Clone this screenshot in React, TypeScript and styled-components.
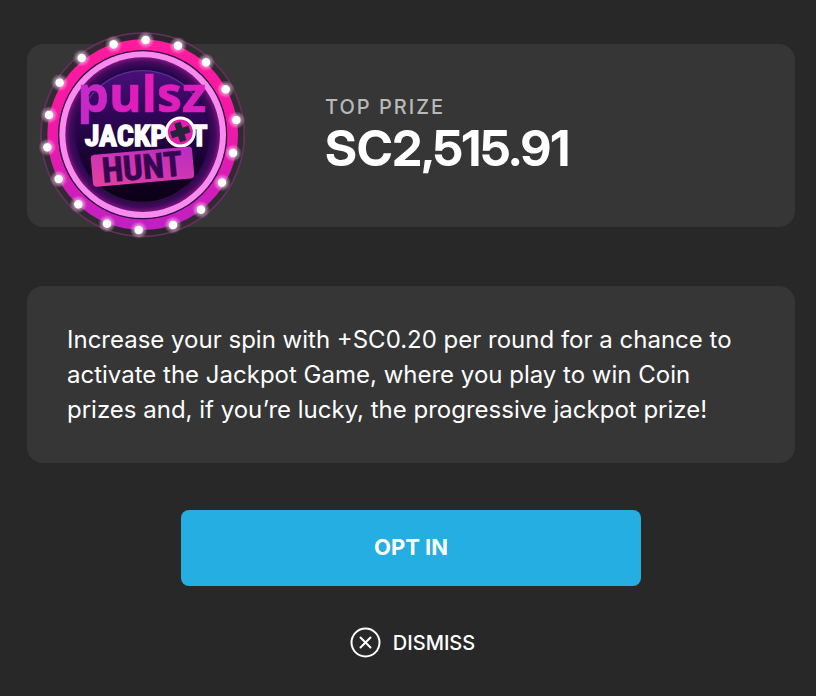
import React from "react";
import styled, { createGlobalStyle } from "styled-components";

const GlobalStyle = createGlobalStyle`
  *, *::before, *::after { box-sizing: border-box; }
  body {
    margin: 0;
    background: #282828;
    color: #fff;
    font-family: Inter, "Liberation Sans", sans-serif;
  }
`;

const Dialog = styled.main`
  display: flex;
  flex-direction: column;
  padding: 44px 21px 36px 27px;
`;

const Card = styled.section`
  position: relative;
  border-radius: 16px;
  background: #363636;
`;

const PrizeCard = styled(Card)`
  padding: 50px 24px 49px 298px;
`;

const MessageCard = styled(Card)`
  margin-top: 59px;
  padding: 36px 40px;
`;

const Emblem = styled.svg`
  position: absolute;
  left: 3px;
  top: -19px;
  width: 225px;
  height: 220px;
`;

const PrizeLabel = styled.h2`
  margin: 0;
  color: #b9b9b9;
  font-size: 20px;
  font-weight: 500;
  line-height: 26px;
  letter-spacing: 2px;
`;

const PrizeAmount = styled.p`
  margin: 0;
  font-family: "Inter Display", Inter, "Liberation Sans", sans-serif;
  font-size: 49px;
  font-weight: 700;
  line-height: 58px;
`;

const Message = styled.p`
  margin: 0;
  font-size: 24px;
  line-height: 35px;
`;

const Actions = styled.div`
  display: flex;
  flex-direction: column;
  align-items: center;
  gap: 38px;
  margin-top: 47px;
`;

const OptInButton = styled.button`
  width: 60%;
  height: 76px;
  padding: 0 0 2px;
  border: 0;
  border-radius: 8px;
  background: #25aee1;
  color: #fff;
  font: 700 22px Inter, "Liberation Sans", sans-serif;
  cursor: pointer;
`;

const DismissButton = styled.button`
  display: flex;
  align-items: center;
  gap: 12px;
  padding: 3px 0 3px 3px;
  border: 0;
  background: none;
  color: #fff;
  font: 500 20px Inter, "Liberation Sans", sans-serif;
  cursor: pointer;
`;

const bulbs = [
  [347, 45], [444, 62], [528, 112], [587, 193], [619, 285], [609, 384],
  [576, 473], [513, 554], [429, 600], [326, 615], [231, 596], [145, 538],
  [86, 462], [52, 367], [57, 270], [89, 173], [155, 99], [251, 58],
];

const condensed = "'Liberation Sans Narrow', 'Roboto Condensed', Roboto, sans-serif";

const JackpotEmblem = () => (
  <Emblem viewBox="0 0 675 660" role="img" aria-label="Pulsz Jackpot Hunt">
    <defs>
      <linearGradient id="rim" x1="0" y1="0" x2="0" y2="1">
        <stop offset="0" stopColor="#ff1b9d" />
        <stop offset="0.4" stopColor="#f518a5" />
        <stop offset="1" stopColor="#bf20c4" />
      </linearGradient>
      <radialGradient id="bowl">
        <stop offset="0.8" stopColor="#1b0242" />
        <stop offset="0.87" stopColor="#2c0650" />
        <stop offset="0.94" stopColor="#430a5c" />
        <stop offset="1" stopColor="#7a1480" />
      </radialGradient>
      <linearGradient id="disc" x1="0" y1="0" x2="0" y2="1">
        <stop offset="0" stopColor="#491079" />
        <stop offset="0.3" stopColor="#32065c" />
        <stop offset="0.65" stopColor="#1a0332" />
        <stop offset="1" stopColor="#0b0015" />
      </linearGradient>
      <linearGradient id="brand" x1="0" y1="0" x2="1" y2="0">
        <stop offset="0" stopColor="#c32bcb" />
        <stop offset="0.5" stopColor="#e51bba" />
        <stop offset="1" stopColor="#d81fbe" />
      </linearGradient>
      <linearGradient id="plate" x1="0" y1="1" x2="1" y2="0">
        <stop offset="0" stopColor="#e63f9f" />
        <stop offset="1" stopColor="#b92bc5" />
      </linearGradient>
      <radialGradient id="glow">
        <stop offset="0" stopColor="#fff" />
        <stop offset="0.42" stopColor="#fff" />
        <stop offset="0.52" stopColor="#ffe3f5" stopOpacity="0.5" />
        <stop offset="1" stopColor="#ffb3e5" stopOpacity="0" />
      </radialGradient>
    </defs>
    <circle cx="338" cy="329" r="305" fill="#30232f" fillOpacity="0.6" stroke="#65305d" strokeWidth="5" />
    <circle cx="338" cy="329" r="286" fill="url(#rim)" />
    <circle cx="338" cy="329" r="254" fill="#300744" />
    <circle cx="338" cy="329" r="250" fill="#f98bef" />
    <circle cx="338" cy="329" r="232" fill="url(#bowl)" />
    <circle cx="338" cy="334" r="198" fill="url(#disc)" />
    <path d="M174 224A198 198 0 0 1 502 224" fill="none" stroke="#54318d" strokeWidth="4" />
    <path d="M210 485A198 198 0 0 0 466 485" fill="none" stroke="#2d133c" strokeWidth="4" />
    {bulbs.map(([x, y]) => (
      <circle key={`${x}-${y}`} cx={x} cy={y} r="27" fill="url(#glow)" />
    ))}
    <text x="142" y="262" fill="url(#brand)" stroke="url(#brand)" strokeWidth="2" fontFamily="'Open Sans', sans-serif" fontSize="150" fontWeight="700">pulsz</text>
    <g fill="#fff" fontFamily={condensed} fontSize="90" fontWeight="700" stroke="#fff" strokeWidth="4">
      <text x="164" y="364">JACKP</text>
      <text x="484" y="364">T</text>
    </g>
    <circle cx="451" cy="321" r="42" fill="#e51cae" stroke="#fff" strokeWidth="9" />
    <path d="M-10-29H10V-10H29V10H10V29H-10V10H-29V-10H-10Z" fill="#25243a" transform="translate(451 321) rotate(-18)" />
    <g transform="rotate(-5 337 425)">
      <rect x="185" y="377" width="305" height="96" rx="12" fill="url(#plate)" />
      <text x="336" y="462" textAnchor="middle" fill="#35064f" stroke="#35064f" strokeWidth="2" fontFamily={condensed} fontSize="104" fontWeight="700">HUNT</text>
    </g>
  </Emblem>
);

const DismissIcon = () => (
  <svg width="31" height="31" viewBox="0 0 31 31" fill="none" stroke="currentColor" strokeWidth="2" strokeLinecap="round" aria-hidden="true">
    <circle cx="15.5" cy="15.5" r="14" />
    <path d="M10.5 10.5L20.5 20.5M20.5 10.5L10.5 20.5" />
  </svg>
);

export default function App() {
  return (
    <>
      <GlobalStyle />
      <Dialog>
        <PrizeCard>
          <JackpotEmblem />
          <PrizeLabel>TOP PRIZE</PrizeLabel>
          <PrizeAmount>SC2,515.91</PrizeAmount>
        </PrizeCard>
        <MessageCard>
          <Message>
            Increase your spin with +SC0.20 per round for a chance to activate the Jackpot Game, where
            you play to win Coin prizes and, if you’re lucky, the progressive jackpot prize!
          </Message>
        </MessageCard>
        <Actions>
          <OptInButton type="button">OPT IN</OptInButton>
          <DismissButton type="button">
            <DismissIcon />
            DISMISS
          </DismissButton>
        </Actions>
      </Dialog>
    </>
  );
}
